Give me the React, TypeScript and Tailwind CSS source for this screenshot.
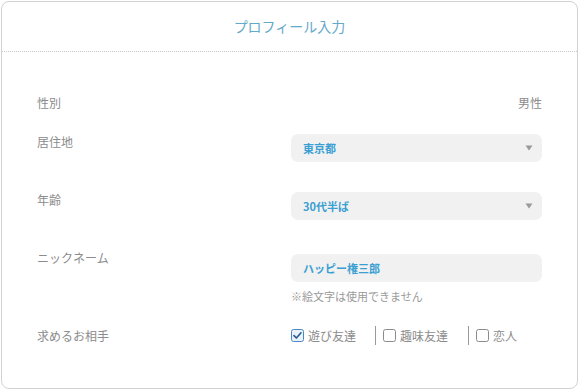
const font = { fontFamily: '"Noto Sans CJK JP", "Noto Sans", sans-serif' };

function Arrow() {
  return (
    <svg width="8" height="6" viewBox="0 0 8 6" className="shrink-0">
      <path d="M0.5 0.5 L7.5 0.5 L4 5.5 Z" fill="#9a9a9a" />
    </svg>
  );
}

function Check({ checked }: { checked?: boolean }) {
  return (
    <svg width="13" height="13" viewBox="0 0 13 13" className="shrink-0">
      <rect
        x="0.5"
        y="0.5"
        width="12"
        height="12"
        rx="2"
        fill={checked ? "#eaf3fb" : "#ffffff"}
        stroke={checked ? "#4b87c2" : "#8a8a8a"}
      />
      {checked && (
        <path
          d="M3 6.6 L5.4 9 L10 3.8"
          fill="none"
          stroke="#2c5f93"
          strokeWidth="1.7"
          strokeLinecap="round"
          strokeLinejoin="round"
        />
      )}
    </svg>
  );
}

function Select({ value }: { value: string }) {
  return (
    <div className="flex h-[28px] w-[251px] items-center justify-between rounded-[7px] bg-[#f1f1f1] pl-[12px] pr-[9px]">
      <span className="text-[11px] font-bold text-[#3a9fd2]">{value}</span>
      <Arrow />
    </div>
  );
}

export default function App() {
  return (
    <div className="h-[391px] w-[580px] bg-white p-px" style={font}>
      <div className="h-[388px] w-[577px] rounded-[8px] border border-[#d2d2d2] bg-white">
        <div className="flex h-[50px] items-center justify-center border-b border-dotted border-[#c8c8c8]">
          <h1 className="text-[14px] text-[#63a9c9]">プロフィール入力</h1>
        </div>

        <div className="pl-[35px] pr-[35px] pt-[43px] text-[12px] leading-[16px] text-[#8c8c8c]">
          <div className="flex justify-between">
            <span>性別</span>
            <span>男性</span>
          </div>

          <div className="mt-[23px] flex justify-between">
            <span>居住地</span>
            <Select value="東京都" />
          </div>

          <div className="mt-[30px] flex justify-between">
            <span>年齢</span>
            <Select value="30代半ば" />
          </div>

          <div className="mt-[34px] flex justify-between">
            <span className="-mt-[4px]">ニックネーム</span>
            <div className="w-[251px]">
              <div className="flex h-[28px] items-center rounded-[7px] bg-[#f1f1f1] pl-[12px]">
                <span className="text-[11px] font-bold text-[#3a9fd2]">ハッピー権三郎</span>
              </div>
              <p className="mt-[6px] text-[11px] text-[#9a9a9a]">※絵文字は使用できません</p>
            </div>
          </div>

          <div className="mt-[22px] flex items-center justify-between">
            <span>求めるお相手</span>
            <div className="flex w-[251px] items-center">
              <label className="flex items-center gap-[4px]">
                <Check checked />
                <span>遊び友達</span>
              </label>
              <span className="ml-[19px] mr-[7px] h-[19px] w-px bg-[#9a9a9a]" />
              <label className="flex items-center gap-[4px]">
                <Check />
                <span>趣味友達</span>
              </label>
              <span className="ml-[20px] mr-[7px] h-[19px] w-px bg-[#9a9a9a]" />
              <label className="flex items-center gap-[4px]">
                <Check />
                <span>恋人</span>
              </label>
            </div>
          </div>
        </div>
      </div>
    </div>
  );
}
